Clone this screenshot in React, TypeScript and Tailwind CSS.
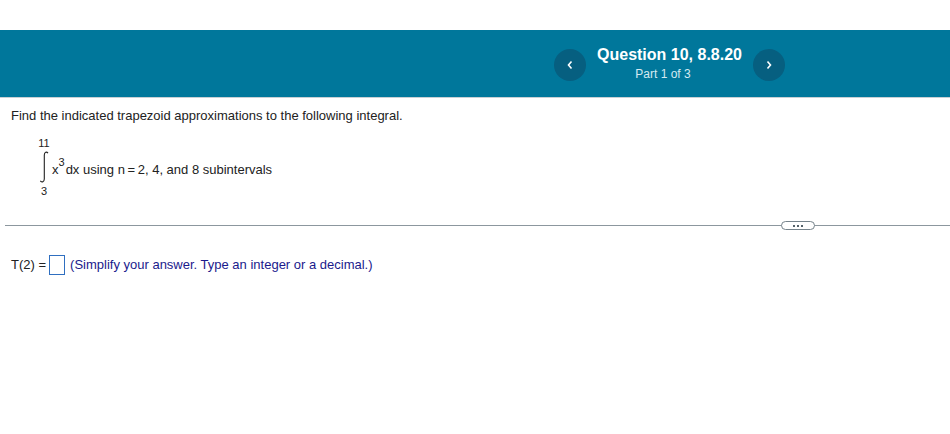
export default function App() {
  const font = { fontFamily: '"Liberation Sans", Arial, sans-serif' };
  return (
    <div className="w-[950px] h-[434px] bg-white overflow-hidden flex flex-col text-[13px] text-[#222]" style={font}>
      <div className="h-[30px]" />
      <header className="h-[68px] bg-[#00779b] border-b border-[#c8d0d4] flex items-center justify-end pr-[165px]">
        <button className="w-8 h-8 rounded-full bg-[#065f80] flex items-center justify-center mt-[3px]">
          <svg width="8" height="10" viewBox="0 0 8 10"><path d="M5.5 1.5 2.5 5l3 3.5" fill="none" stroke="#fff" strokeWidth="1.6" /></svg>
        </button>
        <div className="w-[167px] flex flex-col items-center mt-[1px]">
          <div className="text-[16px] leading-[20px] font-bold text-white">Question 10, 8.8.20</div>
          <div className="text-[12px] leading-[18px] text-[#d4eaf2] mr-[13px]">Part 1 of 3</div>
        </div>
        <button className="w-8 h-8 rounded-full bg-[#065f80] flex items-center justify-center mt-[3px]">
          <svg width="8" height="10" viewBox="0 0 8 10"><path d="M2.5 1.5 5.5 5l-3 3.5" fill="none" stroke="#fff" strokeWidth="1.6" /></svg>
        </button>
      </header>
      <main className="pl-[11px] flex flex-col">
        <p className="mt-[10px] leading-[16px]">Find the indicated trapezoid approximations to the following integral.</p>
        <div className="mt-[13px] ml-[26px] flex items-center h-[60px]">
          <div className="w-[14px] flex flex-col items-center justify-between h-full text-[11px] leading-[12px]">
            <span>11</span>
            <svg width="12" height="32" viewBox="0 0 12 32"><path d="M10 2.2C8.6.4 6.4 1 6.3 4v24c-.1 3-2.3 3.6-4 1.8" fill="none" stroke="#222" strokeWidth="1.1" /></svg>
            <span>3</span>
          </div>
          <div className="ml-px mt-[6px] flex items-baseline">
            <span>x</span>
            <span className="text-[11px] relative top-[-8px]">3</span>
            <span className="ml-[1px]">dx using n{"\u2009"}={"\u2009"}2, 4, and 8 subintervals</span>
          </div>
        </div>
      </main>
      <div className="mt-[28px] ml-[5px] relative h-px bg-[#8c979e]">
        <div className="absolute left-[776px] top-[-4px] w-[34px] h-[9px] bg-white border border-[#76838b] rounded-full flex items-center justify-center gap-[2px]">
          <span className="w-[2px] h-[2px] bg-[#55626a]" />
          <span className="w-[2px] h-[2px] bg-[#55626a]" />
          <span className="w-[2px] h-[2px] bg-[#55626a]" />
        </div>
      </div>
      <div className="mt-[29px] pl-[11px] flex items-center h-[20px]">
        <span>T(2) =</span>
        <span className="ml-[3px] w-[16px] h-[20px] border border-[#2f6fc0]" />
        <span className="ml-[5px] text-[#1a1a8c]">(Simplify your answer. Type an integer or a decimal.)</span>
      </div>
    </div>
  );
}
